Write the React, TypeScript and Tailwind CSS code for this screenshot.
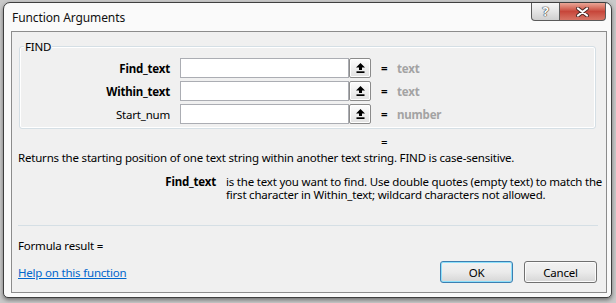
import React from "react";

function RefButton() {
  return (
    <div className="w-[22px] h-[20px] border border-[#8b8b8b] rounded-[2px] bg-gradient-to-b from-[#fdfdfd] to-[#e2e2e2] flex items-center justify-center shadow-[inset_0_0_0_1px_#ffffff]">
      <svg width="9" height="10" viewBox="0 0 9 10">
        <path d="M4.5 0 L9 4.5 L6 4.5 L6 7 L3 7 L3 4.5 L0 4.5 Z" fill="#000" />
        <rect x="0.5" y="8.3" width="8" height="1.7" fill="#000" />
      </svg>
    </div>
  );
}

function ArgRow({ label, bold, value }: { label: string; bold: boolean; value: string }) {
  return (
    <div className="flex items-center h-[20px] shrink-0">
      <div className={`w-[150px] text-right ${bold ? "font-bold" : ""} text-[#000]`}>{label}</div>
      <div className="ml-[10px] w-[169px] h-[20px] border border-[#abadb3] bg-white" />
      <RefButton />
      <div className="ml-[10px] w-[16px] font-bold">=</div>
      <div className="text-[#a3a3a3] font-bold">{value}</div>
    </div>
  );
}

function Btn({ children, focused }: { children: React.ReactNode; focused?: boolean }) {
  return (
    <div
      className={`w-[73px] h-[22px] rounded-[3px] border flex items-center justify-center bg-gradient-to-b from-[#f2f2f2] via-[#ebebeb] to-[#d6d6d6] ${
        focused
          ? "border-[#3c7fb1] shadow-[inset_0_0_0_1px_#8ee0fb]"
          : "border-[#707070] shadow-[inset_0_0_0_1px_#fbfbfb]"
      }`}
    >
      {children}
    </div>
  );
}

export default function App() {
  return (
    <div className="w-[616px] h-[303px] bg-[#c9c9c9] font-['Noto_Sans',sans-serif] text-[11.5px] tracking-[-0.2px] leading-[15px] text-black overflow-hidden">
      <div className="ml-[3px] mt-[2px] w-[609px] h-[296px] border border-[#3f3f3f] rounded-t-[7px] rounded-b-[5px] bg-[#fafafa] shadow-[0_2px_4px_rgba(0,0,0,0.45)] flex flex-col">
        {/* Title bar */}
        <div className="h-[28px] shrink-0 flex justify-between items-start">
          <div className="pl-[8px] pt-[7px] text-[#111] text-[12px] tracking-[-0.1px]">Function Arguments</div>
          <div className="flex mr-[5px]">
            <div className="w-[29px] h-[18px] border border-t-0 border-[#5a5a5a] rounded-bl-[4px] bg-gradient-to-b from-[#f6f6f6] via-[#e4e4e4] to-[#cfcfcf] flex items-center justify-center">
              <span className="font-bold text-[13px] leading-[13px] text-white [text-shadow:0_0_1px_#333,0_0_1px_#333,0_0_1px_#333]">?</span>
            </div>
            <div className="w-[46px] h-[18px] border border-t-0 border-l-0 border-[#5a5a5a] rounded-br-[4px] bg-gradient-to-b from-[#e9a697] via-[#c7463a] to-[#d77364] flex items-center justify-center">
              <svg width="15" height="10" viewBox="0 0 15 10">
                <path d="M3 1.5 L12 8.5 M12 1.5 L3 8.5" stroke="#4a2a26" strokeWidth="4" strokeLinecap="round" />
                <path d="M3 1.5 L12 8.5 M12 1.5 L3 8.5" stroke="#ffffff" strokeWidth="2.2" strokeLinecap="round" />
              </svg>
            </div>
          </div>
        </div>

        {/* Inner panel */}
        <div className="ml-[7px] w-[596px] h-[262px] shrink-0 border border-[#8c8c8c] bg-[#f0f0f0] flex flex-col">
          {/* Group box */}
          <div className="relative shrink-0 mt-[14px] ml-[7px] w-[577px] h-[83px] border border-[#d5dfe5] rounded-[3px] shadow-[inset_0_0_0_1px_#ffffff]">
            <div className="absolute left-[4px] top-[-8px] px-[1px] bg-[#f0f0f0] leading-[15px]">FIND</div>
            <div className="mt-[11px] flex flex-col gap-[3px]">
              <ArgRow label="Find_text" bold value="text" />
              <ArgRow label="Within_text" bold value="text" />
              <ArgRow label="Start_num" bold={false} value="number" />
            </div>
          </div>

          <div className="shrink-0 mt-[5px] pl-[369px] h-[15px]">=</div>
          <div className="shrink-0 mt-[1px] pl-[6px] h-[15px] whitespace-nowrap">
            Returns the starting position of one text string within another text string. FIND is case-sensitive.
          </div>

          <div className="shrink-0 mt-[10px] ml-[6px] flex leading-[13px] h-[26px]">
            <div className="w-[198px] shrink-0 text-right font-bold">Find_text</div>
            <div className="ml-[10px] w-[378px] shrink-0">
              is the text you want to find. Use double quotes (empty text) to match the first character in Within_text; wildcard characters not allowed.
            </div>
          </div>

          <div className="shrink-0 mt-[24px] ml-[6px] w-[580px] border-t border-[#d5dfe5]" />

          <div className="shrink-0 mt-[12px] pl-[6px] h-[15px]">Formula result =</div>

          <div className="shrink-0 mt-[8px] flex items-center h-[22px]">
            <div className="pl-[6px] text-[#0066cc] underline">Help on this function</div>
            <div className="ml-auto mr-[9px] flex gap-[11px]">
              <Btn focused>OK</Btn>
              <Btn>Cancel</Btn>
            </div>
          </div>
        </div>
      </div>
    </div>
  );
}
